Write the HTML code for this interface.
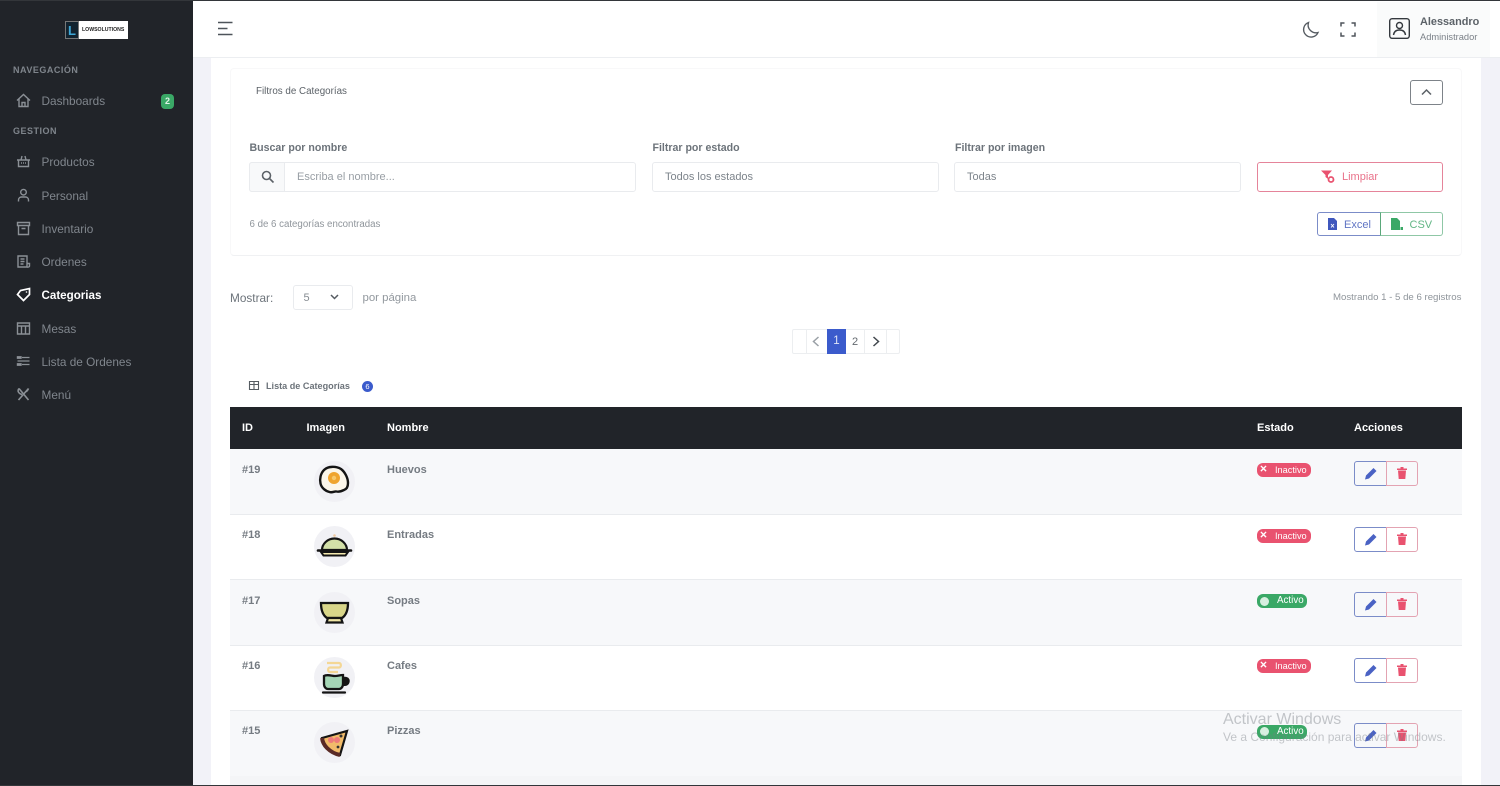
<!DOCTYPE html>
<html lang="es">
<head>
<meta charset="utf-8">
<title>Categorias</title>
<style>
html,body{margin:0;padding:0;width:1500px;height:786px;overflow:hidden;background:#fff}
body{position:relative;font-family:"Liberation Sans",sans-serif;color:#6c757d}
#p{position:absolute;left:0;top:0;width:1500px;height:786px;overflow:hidden;filter:blur(.35px)}
.a{position:absolute;white-space:nowrap}
.box{position:absolute;box-sizing:border-box}
svg{position:absolute;overflow:visible}
.nav{position:absolute;left:41.5px;font-size:11.8px;color:#80868d;white-space:nowrap;line-height:16px}
.ni{stroke:#8b9096;fill:none;stroke-width:1.4}
.sec{position:absolute;left:13px;font-size:9px;font-weight:bold;color:#7f858c;letter-spacing:.5px;line-height:12px}
.lbl{position:absolute;font-size:10.6px;font-weight:bold;color:#6c737a;white-space:nowrap;line-height:14px}
.inp{position:absolute;box-sizing:border-box;height:30px;top:162px;border:1px solid #e9ebee;border-radius:3px;background:#fff;font-size:11px;color:#7d848b;line-height:29px;padding-left:12px;white-space:nowrap}
.row{position:absolute;left:230px;width:1232px;box-sizing:border-box;border-bottom:1px solid #e9ebee}
.id,.nm{position:absolute;font-size:11px;font-weight:bold;color:#757b82;line-height:14px}
.th{position:absolute;top:421px;font-size:11px;font-weight:bold;color:#fff;line-height:14px}
.circ{position:absolute;left:314px;width:41px;height:41px;border-radius:50%;background:#f1f1f5}
.badge{position:absolute;left:1257px;height:14px;border-radius:6px}
.red{background:#e9526f;width:54px}
.grn{background:#3aa866;width:50px}
.bt{position:absolute;font-size:9.2px;color:#fff;line-height:14px;white-space:nowrap}
.btnE,.btnD{position:absolute;box-sizing:border-box;height:25px;background:transparent}
.btnE{left:1354px;width:33px;border:1px solid #7b8cc8;border-radius:3px 0 0 3px}
.btnD{left:1386px;width:32px;border:1px solid #e3a3b2;border-radius:0 3px 3px 0}
</style>
</head>
<body>
<div id="p">
<!-- backgrounds -->
<div class="box" style="left:193px;top:0;width:1307px;height:786px;background:#f2f2f8"></div>
<div class="box" style="left:211px;top:58px;width:1270px;height:728px;background:#fff"></div>
<div class="box" style="left:0;top:0;width:193px;height:786px;background:#212429"></div>
<div class="box" style="left:193px;top:0;width:1307px;height:58px;background:#fff;border-bottom:1px solid #eceef1"></div>
<div class="box" style="left:1377px;top:2px;width:113px;height:55px;background:#fafbfb"></div>

<!-- logo -->
<div class="box" style="left:65px;top:21px;width:63px;height:18px;background:#fff"></div>
<div class="box" style="left:65px;top:21px;width:14px;height:18px;background:#12232f;border:1px solid #777"></div>
<div class="a" style="left:68px;top:23px;font-size:13px;font-weight:bold;color:#3fa7d6;line-height:15px">L</div>
<div class="a" style="left:82px;top:26px;font-size:5.2px;font-weight:bold;color:#222;line-height:8px">LOWSOLUTIONS</div>

<!-- sidebar -->
<div class="sec" style="top:64px">NAVEGACIÓN</div>
<div class="sec" style="top:125px">GESTION</div>

<svg class="ni" style="left:16px;top:93px" width="15" height="15" viewBox="0 0 15 15"><path d="M1 7.5 7.5 1.500 14 7.500M3 6v7.500h9V6M6 13.500V9.500h3v4"/></svg>
<div class="nav" style="top:93px">Dashboards</div>
<div class="box" style="left:161px;top:94px;width:13px;height:15px;border-radius:4px;background:#3aa866;color:#dff3e7;font-size:9px;font-weight:bold;text-align:center;line-height:15px">2</div>

<svg class="ni" style="left:16px;top:154px" width="15" height="15" viewBox="0 0 15 15"><path d="M1 6h13M2.500 6v6.500h10V6M5 6l1-4M10 6 9 2M5 9h1M7 9h1M9 9h1"/></svg>
<div class="nav" style="top:154px">Productos</div>

<svg class="ni" style="left:16px;top:188px" width="15" height="15" viewBox="0 0 15 15"><circle cx="7.500" cy="4.200" r="2.800"/><path d="M2.500 13.500V12c0-2 1.600-3 3-3h4c1.400 0 3 1 3 3v1.500"/></svg>
<div class="nav" style="top:188px">Personal</div>

<svg class="ni" style="left:16px;top:221px" width="15" height="15" viewBox="0 0 15 15"><path d="M1.500 1.500h12v3h-12zM2.500 4.500v9h10v-9M5.500 7.500h4"/></svg>
<div class="nav" style="top:221px">Inventario</div>

<svg class="ni" style="left:16px;top:254px" width="15" height="15" viewBox="0 0 15 15"><path d="M11 13H2V2h9v11M4.500 5h4M4.500 7.500h4M4.500 10h3M11 9.500h2.500V12c0 1-1 1.200-2.500 1.200"/></svg>
<div class="nav" style="top:254px">Ordenes</div>

<svg style="left:16px;top:287px" width="15" height="15" viewBox="0 0 15 15" fill="none" stroke="#fff" stroke-width="1.700"><path d="M1.500 7.500 4.500 3.500 13.500 1.500v6L7.500 13.500z"/><circle cx="10.500" cy="5" r=".8" fill="#fff" stroke="none"/></svg>
<div class="nav" style="top:288px;color:#fff;font-weight:bold;font-size:11.600px">Categorias</div>

<svg class="ni" style="left:16px;top:321px" width="15" height="15" viewBox="0 0 15 15"><path d="M1.500 2h12v11h-12zM1.500 5h12M5.500 5v8M9.500 5v8"/></svg>
<div class="nav" style="top:321px">Mesas</div>

<svg class="ni" style="left:16px;top:354px" width="15" height="15" viewBox="0 0 15 15"><path d="M6 3.500h7.500M1.500 7h12M6 10.500h7.500" stroke-width="1.300"/><path d="M1.500 2.800h3.500v1.400H1.500zM1.500 9.800h3.500v1.400H1.500z" fill="#8b9096"/></svg>
<div class="nav" style="top:354px">Lista de Ordenes</div>

<svg class="ni" style="left:16px;top:387px" width="15" height="15" viewBox="0 0 15 15"><path d="M3 1.500 12.500 13M12.500 1.500 2.500 13M3 1.500C1 4 2.500 6.500 6 7.500M12.500 1.500c-.5 1.500-1.500 3-3.500 3.500" stroke-width="1.600"/></svg>
<div class="nav" style="top:387px">Menú</div>

<!-- header -->
<svg style="left:217px;top:21px" width="17" height="15" viewBox="0 0 17 15" fill="none" stroke="#4e545a" stroke-width="1.600"><path d="M1 1.500h14.500M1 7.500h9.500M1 13.500h14.500"/></svg>
<svg style="left:1302px;top:21px" width="17" height="17" viewBox="0 0 17 17" fill="none" stroke="#565c62" stroke-width="1.400"><path d="M6.500 1.500A7.500 7.500 0 1 0 16 11.500C10.500 13 4.500 8 6.500 1.500z"/></svg>
<svg style="left:1340px;top:22px" width="16" height="15" viewBox="0 0 16 15" fill="none" stroke="#4e545a" stroke-width="1.500"><path d="M1 4.500V1h3.500M11.500 1H15v3.500M15 10.500V14h-3.500M4.500 14H1v-3.500"/></svg>
<svg style="left:1389px;top:18px" width="21" height="21" viewBox="0 0 21 21" fill="none" stroke="#34393e" stroke-width="1.400"><rect x=".7" y=".7" width="19.600" height="19.600" rx="2.500"/><circle cx="10.500" cy="7.500" r="3"/><path d="M4.500 17c.5-3.500 3-5 6-5s5.500 1.500 6 5"/></svg>
<div class="a" style="left:1420px;top:15px;font-size:10.900px;font-weight:bold;color:#5c6268;line-height:14px">Alessandro</div>
<div class="a" style="left:1420px;top:31px;font-size:9.300px;color:#7b8188;line-height:12px">Administrador</div>

<!-- filter card -->
<div class="box" style="left:230px;top:68px;width:1232px;height:188px;background:#fff;border:1px solid #f8f8f9;border-bottom:1px solid #f0f1f3;border-radius:4px"></div>
<div class="a" style="left:256px;top:86px;font-size:9.800px;color:#5c6268;line-height:12px">Filtros de Categorías</div>
<div class="box" style="left:1410px;top:80px;width:33px;height:25px;border:1px solid #7d8389;border-radius:3px"></div>
<svg style="left:1421px;top:88px" width="11" height="8" viewBox="0 0 11 8" fill="none" stroke="#5a6066" stroke-width="1.500"><path d="M1 6.500 5.500 2 10 6.500"/></svg>

<div class="lbl" style="left:249.500px;top:141px">Buscar por nombre</div>
<div class="lbl" style="left:652.500px;top:141px">Filtrar por estado</div>
<div class="lbl" style="left:955px;top:141px">Filtrar por imagen</div>

<div class="inp" style="left:249px;width:387px;padding-left:47px;color:#989ea4">Escriba el nombre...</div>
<div class="box" style="left:249px;top:162px;width:36px;height:30px;background:#f8f9fa;border:1px solid #e9ebee;border-radius:3px 0 0 3px"></div>
<svg style="left:261px;top:170px" width="14" height="14" viewBox="0 0 14 14" fill="none" stroke="#5c6268" stroke-width="1.600"><circle cx="5.500" cy="5.500" r="4"/><path d="M8.500 8.500 12.500 12.500"/></svg>
<div class="inp" style="left:652px;width:287px">Todos los estados</div>
<div class="inp" style="left:954px;width:287px">Todas</div>

<div class="box" style="left:1257px;top:162px;width:186px;height:30px;border:1px solid #e5849a;border-radius:3px"></div>
<svg style="left:1321px;top:170px" width="14" height="14" viewBox="0 0 14 14"><path d="M0 .5h11L7 5v4L4.500 7V5z" fill="#e9526f"/><circle cx="10" cy="9.500" r="2.500" fill="none" stroke="#e9526f" stroke-width="1.800"/></svg>
<div class="a" style="left:1342px;top:170px;font-size:11px;color:#e9728a;line-height:14px">Limpiar</div>

<div class="a" style="left:249.500px;top:219px;font-size:9.700px;color:#8f959b;line-height:12px">6 de 6 categorías encontradas</div>

<div class="box" style="left:1317px;top:212px;width:64px;height:24px;border:1px solid #7b8cc8;border-radius:3px 0 0 3px"></div>
<div class="box" style="left:1380px;top:212px;width:63px;height:24px;border:1px solid #8fc7a6;border-left:1px solid #5aa87a;border-radius:0 3px 3px 0"></div>
<svg style="left:1328px;top:218px" width="9" height="12" viewBox="0 0 9 12"><path d="M0 0h6l3 3v9H0z" fill="#3f57bd"/><path d="M3 6l3 3.500M6 6 3 9.500" stroke="#fff" stroke-width=".9"/></svg>
<div class="a" style="left:1344px;top:218px;font-size:11px;color:#6075c4;line-height:14px">Excel</div>
<svg style="left:1391px;top:218px" width="12" height="12" viewBox="0 0 12 12"><path d="M0 0h6l3 3v9H0z" fill="#3aa866"/><path d="M9.500 9h2.500v3H9.500z" fill="#3aa866"/></svg>
<div class="a" style="left:1409.500px;top:218px;font-size:11px;color:#62b685;line-height:14px">CSV</div>

<!-- show row -->
<div class="a" style="left:230px;top:291px;font-size:11.800px;color:#6c737a;line-height:14px">Mostrar:</div>
<div class="box" style="left:293px;top:285px;width:60px;height:25px;border:1px solid #e9ebee;border-radius:3px"></div>
<div class="a" style="left:303.500px;top:291px;font-size:11px;color:#868c92;line-height:14px">5</div>
<svg style="left:330px;top:294px" width="9" height="6" viewBox="0 0 9 6" fill="none" stroke="#555b61" stroke-width="1.500"><path d="M1 1 4.500 4.500 8 1"/></svg>
<div class="a" style="left:362.500px;top:291px;font-size:11.400px;color:#92989e;line-height:14px">por página</div>
<div class="a" style="left:1333px;top:292px;font-size:9.650px;color:#8f959b;line-height:12px">Mostrando 1 - 5 de 6 registros</div>

<!-- pagination -->
<div class="box" style="left:792px;top:329px;width:108px;height:25px;border:1px solid #eceef0;border-radius:2px"></div>
<div class="box" style="left:806px;top:329px;width:1px;height:25px;background:#eceef0"></div>
<div class="box" style="left:864px;top:329px;width:1px;height:25px;background:#eceef0"></div>
<div class="box" style="left:886px;top:329px;width:1px;height:25px;background:#eceef0"></div>
<div class="box" style="left:827px;top:329px;width:19px;height:25px;background:#3b5bcc;color:#dfe5f8;font-size:11.500px;text-align:center;line-height:25px">1</div>
<div class="a" style="left:852px;top:335px;font-size:11px;color:#63696f;line-height:14px">2</div>
<svg style="left:812px;top:336px" width="8" height="11" viewBox="0 0 8 11" fill="none" stroke="#9aa0a6" stroke-width="1.500"><path d="M6.500 1 1.500 5.500 6.500 10"/></svg>
<svg style="left:872px;top:336px" width="8" height="11" viewBox="0 0 8 11" fill="none" stroke="#41474d" stroke-width="1.500"><path d="M1.500 1 6.500 5.500 1.500 10"/></svg>

<!-- table title -->
<svg style="left:249px;top:381px" width="10" height="9" viewBox="0 0 10 9" fill="none" stroke="#565c62" stroke-width="1.100"><path d="M.5.500h9v8h-9zM.5 3.500h9M5 .5v8"/></svg>
<div class="a" style="left:266px;top:380px;font-size:9.100px;font-weight:bold;color:#6c737a;line-height:12px">Lista de Categorías</div>
<div class="box" style="left:362px;top:381px;width:11px;height:11px;border-radius:50%;background:#3b5bcc;color:#fff;font-size:7.500px;text-align:center;line-height:11px">6</div>

<!-- table -->
<div class="box" style="left:230px;top:407px;width:1232px;height:42px;background:#212429"></div>
<div class="th" style="left:242px">ID</div>
<div class="th" style="left:306.500px">Imagen</div>
<div class="th" style="left:387px">Nombre</div>
<div class="th" style="left:1257px">Estado</div>
<div class="th" style="left:1354px">Acciones</div>

<div class="row" style="top:449px;height:65.500px;background:#f7f8fa"></div>
<div class="row" style="top:514.500px;height:65px;background:#fff"></div>
<div class="row" style="top:579.500px;height:66px;background:#f7f8fa"></div>
<div class="row" style="top:645.500px;height:65px;background:#fff"></div>
<div class="row" style="top:710.500px;height:66px;background:#f7f8fa"></div>
<div class="row" style="top:776px;height:10px;background:#f4f5f7;border:0"></div>

<div class="id" style="left:242px;top:463px">#19</div><div class="nm" style="left:387px;top:463px">Huevos</div>
<div class="id" style="left:242px;top:528px">#18</div><div class="nm" style="left:387px;top:528px">Entradas</div>
<div class="id" style="left:242px;top:593.500px">#17</div><div class="nm" style="left:387px;top:593.500px">Sopas</div>
<div class="id" style="left:242px;top:659px">#16</div><div class="nm" style="left:387px;top:659px">Cafes</div>
<div class="id" style="left:242px;top:724px">#15</div><div class="nm" style="left:387px;top:724px">Pizzas</div>

<!-- food icons -->
<div class="circ" style="top:461px"></div>
<svg style="left:314px;top:461px" width="41" height="41" viewBox="0 0 41 41"><path d="M10 9c4-4 12-4 17-1 4 3 7 9 7 14 0 3-1 6-4 7-3 1.500-5 2-7.500 1.500-2-.5-4 1.500-7 .5-4-1-8-4-9-8.500-1-4.500 0-10 3.500-13.500z" fill="#fbf6ea" stroke="#141414" stroke-width="2.400"/><circle cx="20" cy="17" r="6" fill="#efa42e"/><circle cx="20" cy="17" r="2.200" fill="#f7c86a"/></svg>

<div class="circ" style="top:526px"></div>
<svg style="left:314px;top:526px" width="41" height="41" viewBox="0 0 41 41"><circle cx="20.500" cy="9.500" r="1.300" fill="#f0c9a0"/><path d="M8 24c0-6 5.500-11.500 12.500-11.500S33 18 33 24z" fill="#d3e0a8" stroke="#141414" stroke-width="2.200"/><path d="M4 24.500h33" stroke="#141414" stroke-width="2.600" stroke-linecap="round"/><path d="M7 26h27l-2.500 3.500h-22z" fill="#f4e9ae" stroke="#141414" stroke-width="2"/></svg>

<div class="circ" style="top:592px"></div>
<svg style="left:314px;top:592px" width="41" height="41" viewBox="0 0 41 41"><path d="M7 11h27c0 6-1.500 12-6 15H13c-4.500-3-6-9-6-15z" fill="#d9d689" stroke="#141414" stroke-width="2.300"/><path d="M14 26 12.500 30.500h16L27 26z" fill="#f1e6a6" stroke="#141414" stroke-width="2.200"/></svg>

<div class="circ" style="top:657px"></div>
<svg style="left:314px;top:657px" width="41" height="41" viewBox="0 0 41 41"><path d="M13 6h12c2.500 0 2.500 4.500 0 4.500h-9c-2.500 0-2.500 4.500 0 4.500h8" fill="none" stroke="#f4d795" stroke-width="2.200"/><path d="M10 19c3-2 8 0 11 0s5-1 8-1v9c0 3-2 5-4 5H14c-2 0-4-2-4-5z" fill="#a5d6b6" stroke="#141414" stroke-width="2.300"/><path d="M29 20c5-1 7.500 2 6.500 5.500s-4 3.500-6.500 3.500z" fill="#141414"/><path d="M9 35.500h22" stroke="#141414" stroke-width="2.200" stroke-linecap="round"/></svg>

<div class="circ" style="top:722px"></div>
<svg style="left:314px;top:722px" width="41" height="41" viewBox="0 0 41 41"><path d="M8 16 33 9 26 33c-5-1-9-3-13-7-3-3-4.500-6-5-10z" fill="#f2bb6a" stroke="#141414" stroke-width="2.200"/><path d="M8 16c.5 4 2 7 5 10 4 4 8 6 13 7" fill="none" stroke="#5a2a26" stroke-width="4"/><circle cx="17" cy="18" r="3" fill="#ee7a7a"/><circle cx="23" cy="18" r="3" fill="#ee7a7a"/><circle cx="27" cy="14" r="1.500" fill="#333"/><circle cx="24" cy="25" r="1.400" fill="#333"/></svg>

<!-- badges -->
<div class="badge red" style="top:463px"></div><div class="a" style="left:1259.500px;top:463px;font-size:9.500px;color:#fff;line-height:14px;font-weight:bold">✕</div><div class="bt" style="left:1275px;top:463px">Inactivo</div>
<div class="badge red" style="top:528.500px"></div><div class="a" style="left:1259.500px;top:528.500px;font-size:9.500px;color:#fff;line-height:14px;font-weight:bold">✕</div><div class="bt" style="left:1275px;top:528.500px">Inactivo</div>
<div class="badge grn" style="top:594px"></div><div class="box" style="left:1260px;top:596.500px;width:9px;height:9px;border-radius:50%;background:#d7efe0"></div><div class="bt" style="left:1277px;top:594px;font-size:9.800px">Activo</div>
<div class="badge red" style="top:659px"></div><div class="a" style="left:1259.500px;top:659px;font-size:9.500px;color:#fff;line-height:14px;font-weight:bold">✕</div><div class="bt" style="left:1275px;top:659px">Inactivo</div>
<div class="badge grn" style="top:724.500px"></div><div class="box" style="left:1260px;top:727px;width:9px;height:9px;border-radius:50%;background:#d7efe0"></div><div class="bt" style="left:1277px;top:724.500px;font-size:9.800px">Activo</div>

<!-- action buttons -->
<div class="btnE" style="top:461px"></div><div class="btnD" style="top:461px"></div>
<svg style="left:1365px;top:467px" width="12" height="13" viewBox="0 0 12 13"><path d="M0 12.500 1 8.500 8.500 1l3 3L4 11.500z" fill="#4a62c4"/></svg>
<svg style="left:1397px;top:467px" width="10" height="12" viewBox="0 0 10 12"><path d="M0 1.500h10v1.500H0zM3.500 0h3v1.500h-3zM1 3.500h8L8.300 12H1.700z" fill="#e9526f"/></svg>

<div class="btnE" style="top:526.500px"></div><div class="btnD" style="top:526.500px"></div>
<svg style="left:1365px;top:533px" width="12" height="13" viewBox="0 0 12 13"><path d="M0 12.500 1 8.500 8.500 1l3 3L4 11.500z" fill="#4a62c4"/></svg>
<svg style="left:1397px;top:533px" width="10" height="12" viewBox="0 0 10 12"><path d="M0 1.500h10v1.500H0zM3.500 0h3v1.500h-3zM1 3.500h8L8.300 12H1.700z" fill="#e9526f"/></svg>

<div class="btnE" style="top:592px"></div><div class="btnD" style="top:592px"></div>
<svg style="left:1365px;top:598px" width="12" height="13" viewBox="0 0 12 13"><path d="M0 12.500 1 8.500 8.500 1l3 3L4 11.500z" fill="#4a62c4"/></svg>
<svg style="left:1397px;top:598px" width="10" height="12" viewBox="0 0 10 12"><path d="M0 1.500h10v1.500H0zM3.500 0h3v1.500h-3zM1 3.500h8L8.300 12H1.700z" fill="#e9526f"/></svg>

<div class="btnE" style="top:657.500px"></div><div class="btnD" style="top:657.500px"></div>
<svg style="left:1365px;top:664px" width="12" height="13" viewBox="0 0 12 13"><path d="M0 12.500 1 8.500 8.500 1l3 3L4 11.500z" fill="#4a62c4"/></svg>
<svg style="left:1397px;top:664px" width="10" height="12" viewBox="0 0 10 12"><path d="M0 1.500h10v1.500H0zM3.500 0h3v1.500h-3zM1 3.500h8L8.300 12H1.700z" fill="#e9526f"/></svg>

<div class="btnE" style="top:723px"></div><div class="btnD" style="top:723px"></div>
<svg style="left:1365px;top:729px" width="12" height="13" viewBox="0 0 12 13"><path d="M0 12.500 1 8.500 8.500 1l3 3L4 11.500z" fill="#4a62c4"/></svg>
<svg style="left:1397px;top:729px" width="10" height="12" viewBox="0 0 10 12"><path d="M0 1.500h10v1.500H0zM3.500 0h3v1.500h-3zM1 3.500h8L8.300 12H1.700z" fill="#e9526f"/></svg>

<!-- windows watermark -->
<div class="a" style="left:1223px;top:710px;font-size:16px;color:rgba(120,125,130,.42);line-height:20px">Activar Windows</div>
<div class="a" style="left:1223px;top:730px;font-size:12px;color:rgba(120,125,130,.42);line-height:15px">Ve a Configuración para activar Windows.</div>
</div>
<!-- screen edges -->
<div class="box" style="left:0;top:0;width:1500px;height:1px;background:#33363a"></div>
<div class="box" style="left:0;top:785px;width:1500px;height:1px;background:#33363a"></div>
</body>
</html>
